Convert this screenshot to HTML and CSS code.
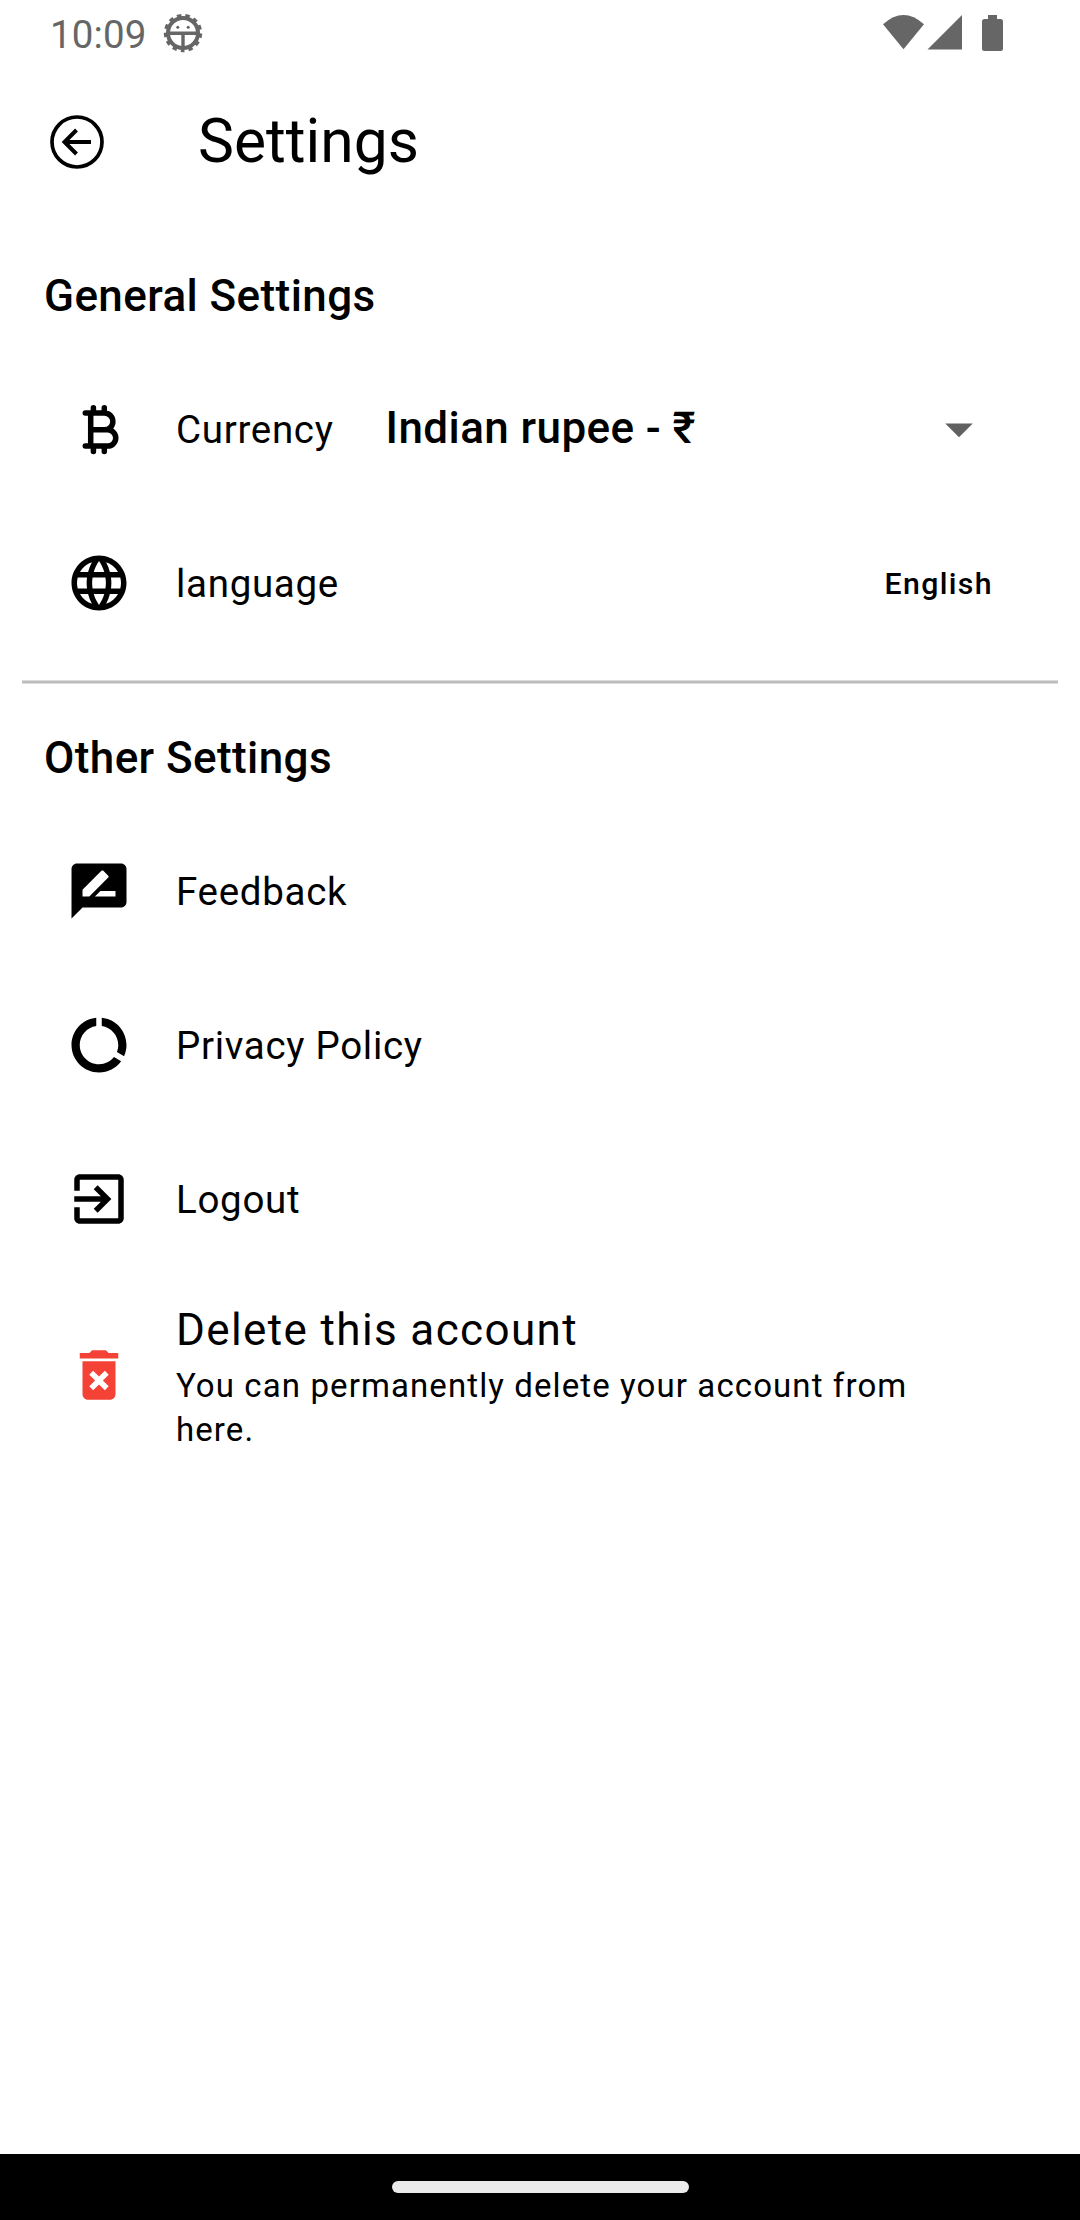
FILE: index.html
```html
<!DOCTYPE html>
<html lang="en">
<head>
<meta charset="utf-8">
<title>Settings</title>
<link rel="stylesheet" href="styles.css">
</head>
<body>
<div class="screen">
  <header class="status-bar">
    <span class="clock">10:09</span>
    <svg class="debug-icon" viewBox="-20 -20 40 40">
      <circle r="15" fill="none" stroke="#666" stroke-width="4"/>
      <circle r="17.4" fill="none" stroke="#666" stroke-width="3.6" stroke-dasharray="4.4 4.010" stroke-dashoffset="2.2" transform="rotate(90)"/>
      <path d="M-14 .2H14M0 .2V14" fill="none" stroke="#666" stroke-width="3.4"/>
      <circle cx="-5.2" cy="-5.8" r="1.5" fill="#666"/>
      <circle cx="5.2" cy="-5.8" r="1.5" fill="#666"/>
    </svg>
    <svg class="system-icons" viewBox="0 0 120 36" fill="#666">
      <path d="M0 9.3Q20.5-9.3 41 9.3L20.5 34.3z"/>
      <path d="M79 0V34.5H44.500z"/>
      <path d="M105 0h9v4h3.500a2.500 2.500 0 0 1 2.500 2.500V33.500a2.500 2.500 0 0 1-2.500 2.500h-16a2.500 2.500 0 0 1-2.500-2.500V6.500a2.500 2.500 0 0 1 2.500-2.500h3.500z"/>
    </svg>
  </header>

  <nav class="app-bar">
    <svg class="back" viewBox="0 0 54 54" fill="none" stroke="#000">
      <circle cx="27" cy="27" r="25" stroke-width="3.7"/>
      <path d="M41 27H15M26.500 15L14.500 27L26.500 39" stroke-width="4"/>
    </svg>
    <h1 class="title">Settings</h1>
  </nav>

  <main class="content">
    <section>
      <h2 class="heading">General Settings</h2>
      <div class="row">
        <svg class="icon" viewBox="0 0 66 66" fill="none" stroke="#000" stroke-width="5.500" stroke-linecap="round" stroke-linejoin="round">
          <path d="M19.300 17.100H38.500a8.350 8.350 0 0 1 0 16.700H24.700M38.500 33.800H41.600a8.150 8.150 0 0 1 0 16.300H19.300M24.700 17.100V50.100M27.400 11.700V17M38.300 11.700V17M27.400 50.500V55.500M38.300 50.500V55.500"/>
        </svg>
        <span class="label">Currency</span>
        <div class="select">
          <span class="select-value">Indian rupee - ₹</span>
          <svg class="icon" viewBox="0 0 24 24" fill="#616161"><path d="M7 10l5 5 5-5z"/></svg>
        </div>
      </div>
      <div class="row">
        <svg class="icon" viewBox="0 0 24 24"><path d="M11.990 2C6.470 2 2 6.480 2 12s4.470 10 9.990 10C17.520 22 22 17.520 22 12S17.520 2 11.990 2zm6.930 6h-2.950c-.320-1.250-.780-2.450-1.380-3.560 1.840.630 3.370 1.910 4.330 3.560zM12 4.040c.830 1.200 1.480 2.530 1.910 3.960h-3.820c.430-1.430 1.080-2.760 1.910-3.960zM4.260 14C4.100 13.360 4 12.690 4 12s.100-1.360.260-2h3.380c-.080.660-.140 1.320-.140 2s.060 1.340.140 2H4.260zm.820 2h2.950c.320 1.250.780 2.450 1.380 3.560-1.840-.630-3.370-1.900-4.330-3.560zm2.950-8H5.080c.960-1.660 2.490-2.930 4.330-3.560C8.810 5.550 8.350 6.750 8.030 8zM12 19.960c-.830-1.200-1.480-2.530-1.910-3.960h3.820c-.430 1.430-1.080 2.760-1.910 3.960zM14.340 14H9.660c-.090-.660-.160-1.320-.160-2s.070-1.350.160-2h4.680c.090.650.160 1.320.160 2s-.070 1.340-.160 2zm.250 5.560c.600-1.110 1.060-2.310 1.380-3.560h2.950c-.960 1.650-2.490 2.930-4.330 3.560zM16.360 14c.080-.660.140-1.320.140-2s-.060-1.340-.140-2h3.380c.160.640.260 1.310.260 2s-.100 1.360-.260 2h-3.380z"/></svg>
        <span class="label">language</span>
        <span class="trailing">English</span>
      </div>
    </section>

    <hr class="divider">

    <section>
      <h2 class="heading">Other Settings</h2>
      <div class="row">
        <svg class="icon" viewBox="0 0 24 24"><path d="M20 2H4c-1.100 0-1.990.900-1.990 2L2 22l4-4h14c1.100 0 2-.900 2-2V4c0-1.100-.900-2-2-2zM6 14v-2.470l6.880-6.880c.200-.200.510-.200.710 0l1.770 1.770c.200.200.200.510 0 .710L8.470 14H6zm12 0h-7.500l2-2H18v2z"/></svg>
        <span class="label">Feedback</span>
      </div>
      <div class="row">
        <svg class="icon" viewBox="0 0 24 24"><path d="M13 2.050v3.030c3.390.490 6 3.390 6 6.920 0 .900-.180 1.750-.480 2.540l2.600 1.530c.560-1.240.880-2.620.880-4.070 0-5.180-3.950-9.450-9-9.950zM12 19c-3.870 0-7-3.130-7-7 0-3.530 2.610-6.430 6-6.920V2.050c-5.060.500-9 4.760-9 9.950 0 5.520 4.470 10 9.990 10 3.310 0 6.240-1.610 8.060-4.090l-2.600-1.530C16.170 17.980 14.210 19 12 19z"/></svg>
        <span class="label">Privacy Policy</span>
      </div>
      <div class="row">
        <svg class="icon" viewBox="0 0 24 24"><path d="M10.090 15.590L11.500 17l5-5-5-5-1.410 1.410L12.670 11H3v2h9.670l-2.580 2.590zM19 3H5c-1.110 0-2 .900-2 2v4h2V5h14v14H5v-4H3v4c0 1.100.890 2 2 2h14c1.100 0 2-.900 2-2V5c0-1.100-.900-2-2-2z"/></svg>
        <span class="label">Logout</span>
      </div>
      <div class="row row-tall">
        <svg class="icon" viewBox="0 0 24 24" fill="#f44336"><path d="M6 19c0 1.100.900 2 2 2h8c1.100 0 2-.900 2-2V7H6v12zm2.460-7.120l1.410-1.410L12 12.590l2.120-2.120 1.410 1.410L13.410 14l2.120 2.120-1.410 1.410L12 15.410l-2.120 2.120-1.410-1.410L10.590 14l-2.130-2.120zM15.500 4l-1-1h-5l-1 1H5v2h14V4h-3.500z"/></svg>
        <div class="text">
          <span class="text-title">Delete this account</span>
          <span class="text-sub">You can permanently delete your account from here.</span>
        </div>
      </div>
    </section>
  </main>

  <footer class="nav-bar"><div class="pill"></div></footer>
</div>
</body>
</html>
```
FILE: styles.css
```css
* { box-sizing: border-box; }
body { margin: 0; background: #fff; color: #000; font-family: Roboto, "Noto Sans", sans-serif; }
svg { display: block; flex: none; }
h1, h2 { margin: 0; }
.screen { width: 1080px; height: 2220px; display: flex; flex-direction: column; }

.status-bar { height: 65px; padding: 0 77px 0 50px; display: flex; align-items: flex-start; color: #666; }
.clock { width: 113.300px; margin-top: 12px; font-size: 38.500px; line-height: 46px; letter-spacing: .1px; white-space: nowrap; }
.debug-icon { width: 40px; height: 40px; margin-top: 13px; }
.system-icons { width: 120px; height: 36px; margin: 15px 0 0 auto; }

.app-bar { height: 154px; padding-left: 50px; display: flex; align-items: center; }
.back { width: 54px; height: 54px; }
.title { margin-left: 94px; font-size: 60.500px; font-weight: 400; line-height: 72px; }

.content { flex: 1; padding-top: 50.500px; }
.heading { height: 82px; padding-left: 44px; font-size: 44px; font-weight: 500; line-height: 52px; letter-spacing: .41px; }
.row { height: 154px; padding: 0 88px 0 66px; display: flex; align-items: center; }
.row-tall { height: 198px; }
.icon { width: 66px; height: 66px; }
.label { margin: 2px 0 0 44px; font-size: 38.500px; line-height: 46px; letter-spacing: .690px; }
.select { flex: 1; margin-left: 52px; display: flex; align-items: center; justify-content: space-between; }
.select-value { margin-bottom: 2px; font-size: 44px; font-weight: 500; line-height: 52px; letter-spacing: .41px; }
.trailing { margin: 2px -1px 0 auto; font-size: 30.250px; font-weight: 500; line-height: 40px; letter-spacing: 1.375px; }
.divider { height: 4px; margin: 20.500px 22px 47.500px; border: solid #dcdcdc; border-width: 1px 0; background: #bdbdbd; }
.text { width: 760px; margin-left: 44px; display: flex; flex-direction: column; }
.text-title { margin: -1px 0 1px; font-size: 44px; line-height: 66px; letter-spacing: 1.375px; }
.text-sub { font-size: 33px; line-height: 44px; letter-spacing: 1.100px; }

.nav-bar { height: 66px; background: #000; display: flex; align-items: center; justify-content: center; }
.pill { width: 297px; height: 12px; border-radius: 6px; background: #ebebeb; }
```
